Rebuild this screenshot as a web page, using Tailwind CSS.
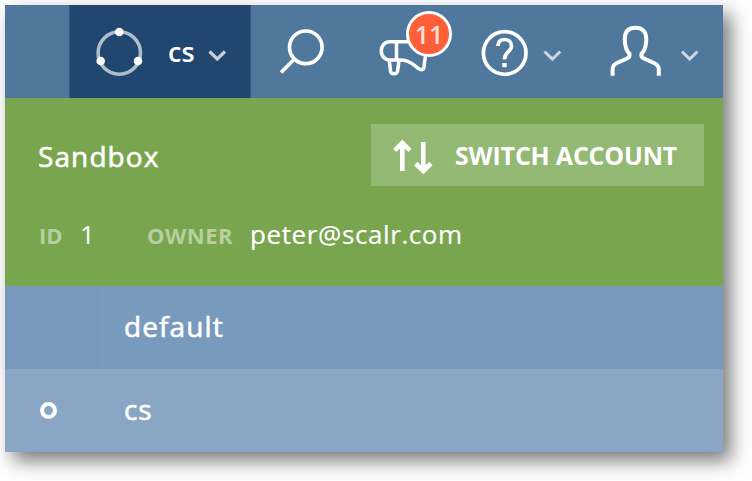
<!DOCTYPE html>
<html lang="en"><head><meta charset="utf-8"><title>Account menu</title>
<script src="https://cdn.jsdelivr.net/npm/@tailwindcss/browser@4"></script></head>
<body class="bg-white w-[752px] h-[481px] overflow-hidden p-[5px] font-['Open_Sans','Noto_Sans',sans-serif] text-white whitespace-nowrap">
<main class="w-[718px] h-[447px] shadow-[8px_9px_18px_rgba(0,0,0,0.52)]">
  <header class="h-[93px] flex bg-[#50779c]">
    <div class="ml-16 w-[182px] h-full bg-[#21466f] border-x border-[#315b84] flex">
      <svg class="w-[92px] h-[93px] shrink-0" viewBox="70 5 92 93" fill="none"><circle cx="119.3" cy="53" r="21.2" stroke="#afbccb" stroke-width="3.6"/><g fill="#fff"><circle cx="119.3" cy="32" r="4.3"/><circle cx="100.7" cy="61" r="4.3"/><circle cx="138" cy="61" r="4.3"/></g></svg>
      <span class="w-[45px] pl-[6px] pt-[31px] text-[27px] leading-[32px] font-semibold">cs</span>
      <svg class="w-[22px] h-[93px]" viewBox="207 5 22 93" fill="none"><path d="M209.5 51.5L217.3 59L225 51.5" stroke="#c5cfda" stroke-width="3.2"/></svg>
    </div>
    <div class="relative w-[472px] h-[93px]">
      <svg class="w-full h-full" viewBox="251 5 472 93" fill="none" stroke="#fff" stroke-width="3.7">
        <circle cx="305.8" cy="47.3" r="16.3"/><path d="M294 59.5L281 72.5"/>
        <path d="M408 41.8H390C384.5 41.8 381.3 46 381.3 50.8C381.3 56.4 385 60 390 60H401C407 60 410.5 62.3 414.5 65.3L418.5 68.5C421.5 70.5 423.7 70 424 66.5L426 52M396.5 42V60M389.3 60.5L390.5 71C391 74.6 397 74.6 397.6 71L399 60.5" stroke-width="3.5"/>
        <circle cx="504.7" cy="53" r="21.3"/><path d="M498 46C497.8 41.8 500.7 39.5 504.3 39.5C508.5 39.5 511.5 42 511.5 46C511.5 52 504.5 51.5 504.5 59.5"/><path d="M504.5 63V67.2" stroke-width="4.4"/>
        <path d="M612.6 75.7V69.5C612.6 65.8 614 64.3 617 63L627.5 58.3Q630 57 629.5 53.8C625.8 50.5 624.8 46 624.8 39C624.8 31.5 628.8 27.8 635.5 27.8C642.2 27.8 646.3 31.5 646.3 39C646.3 46 645.2 50.5 641.5 53.8Q641 57 643.5 58.3L654 63C657 64.3 658.8 65.8 658.8 69.5V75.7" stroke-width="4"/>
        <path d="M544.5 51.5L552.4 59L560.3 51.5M682 51.5L689.7 59L697.4 51.5" stroke="#cbd6e1" stroke-width="3.1"/>
      </svg>
      <div class="absolute left-[155px] top-[6px] w-[46px] h-[46px] rounded-full border-[3.5px] border-white bg-[#ff5f38] text-[25px] leading-[40px] font-semibold text-center text-[#ffded5]">11</div>
    </div>
  </header>
  <section class="h-[188px] bg-[#7aa54f] pt-[26px]">
    <div class="flex h-[62px]">
      <h1 class="w-[366px] pl-[33px] pt-[14px] text-[28px] leading-[36px] tracking-[1.1px] [-webkit-text-stroke:0.6px_white]">Sandbox</h1>
      <button class="w-[333px] h-[62px] bg-[#94b974] flex text-left">
        <svg class="w-[83px] h-[62px] shrink-0" viewBox="371 124 83 62" fill="none" stroke="#fff" stroke-width="4.6"><path d="M402.3 171V143M394.8 150.5L402.3 142.7L409.9 150.5M423.3 142V170M415.8 163.5L423.3 171L431 163.5"/></svg>
        <span class="pl-px pt-[14px] text-[25px] leading-[34px] tracking-[-0.2px] font-bold">SWITCH ACCOUNT</span>
      </button>
    </div>
    <div class="flex h-[40px] mt-[28px] pl-[33px] items-baseline text-[26px] leading-[40px]">
      <span class="w-[42px] pl-px text-[22px] font-bold text-[#b8cf9f]">ID</span><span class="w-[66px]">1</span>
      <span class="w-[104px] pl-px text-[22px] tracking-[0.5px] font-bold text-[#b8cf9f]">OWNER</span><span class="tracking-[0.6px] [-webkit-text-stroke:0.2px_white]">peter@scalr.com</span>
    </div>
  </section>
  <div class="h-[83px] flex bg-[#789bbd]"><div class="w-[93px] border-r border-[#6f95ba]"></div><span class="pl-[26px] pt-[22px] text-[28px] leading-[36px] tracking-[1.1px] [-webkit-text-stroke:0.6px_white]">default</span></div>
  <div class="h-[83px] flex bg-[#89a7c5]"><div class="w-[93px] pl-[35px] pt-[33px]"><div class="size-[17px] rounded-full border-[4.5px] border-white"></div></div><span class="pl-[26px] pt-[22px] text-[28px] leading-[36px] tracking-[0.8px] [-webkit-text-stroke:0.6px_white]">cs</span></div>
</main></body></html>
